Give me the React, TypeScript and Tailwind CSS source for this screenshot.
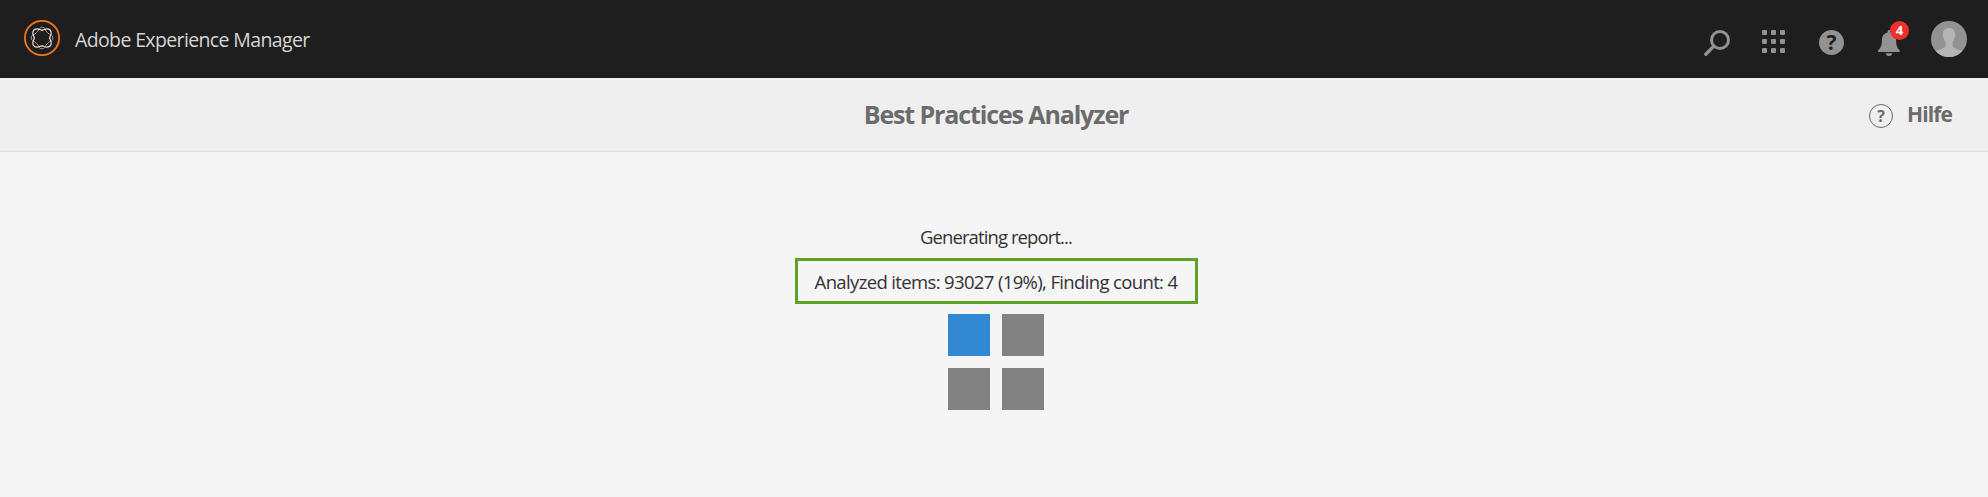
import React from "react";

const quarterTurns = [0, 90, 180, 270];

function Logo() {
  return (
    <svg className="size-9 shrink-0" viewBox="0 0 36 36" fill="none">
      <circle cx="18" cy="18" r="17.1" stroke="#f5761a" strokeWidth="1.8" />
      {quarterTurns.map((a) => (
        <g key={a} transform={`rotate(${a} 18 18)`} strokeLinecap="round">
          <path d="M14.8 9.400C15.400 6.400 20.600 6.400 21.200 9.400C21.800 11.400 24.600 14.200 26.600 14.800" stroke="#a3968e" strokeWidth="1" />
          <path d="M18 10.200C20 10.200 20.600 8.800 22.800 8.800C25.600 8.800 27.200 10.400 27.200 13.200C27.200 15.400 25.800 16 25.800 18" stroke="#f0d9cc" strokeWidth="1.200" />
        </g>
      ))}
    </svg>
  );
}

function SearchIcon() {
  return (
    <svg className="h-[26px] w-[26px]" viewBox="0 0 26 26" fill="none" stroke="#929292" strokeLinecap="round">
      <circle cx="16" cy="10" r="8.5" strokeWidth="3" />
      <path d="M9.6 16.4L1.8 24.2" strokeWidth="3.4" />
    </svg>
  );
}

function BellIcon() {
  return (
    <svg className="h-[26px] w-[22px]" viewBox="0 0 22 26" fill="#929292">
      <path d="M9.7 1.4a1.3 1.3 0 0 1 2.6 0v1.1c3.8.7 5.7 3.6 5.8 7.3.1 5.5.8 7.8 3.5 10.5V22H.2v-1.7C3 17.6 3.8 15.3 3.9 9.8 4 6.1 5.9 3.2 9.7 2.5z" />
      <path d="M7.8 23.3h6.4a3.2 2.7 0 0 1-6.4 0z" />
    </svg>
  );
}

function Avatar() {
  return (
    <svg className="size-9" viewBox="0 0 36 36">
      <defs>
        <clipPath id="avatar-clip">
          <circle cx="18" cy="18" r="18" />
        </clipPath>
      </defs>
      <g clipPath="url(#avatar-clip)">
        <rect width="36" height="36" fill="#929292" />
        <path d="M18 7c4.2 0 6.2 2.6 6 6.5.5.6.4 2.6-.5 3.5-.5 2-1.2 3.2-2 4v4c1 3 8 3.5 10.5 5.5V36H4v-5.5C6.5 28.5 13.5 28 14.5 25v-4c-.8-.8-1.5-2-2-4-.9-.9-1-2.9-.5-3.5C11.8 9.6 13.8 7 18 7z" fill="#b4b4b4" />
      </g>
    </svg>
  );
}

export default function App() {
  return (
    <div className="flex h-[497px] w-full flex-col bg-[#f5f5f5] font-['Open_Sans','Noto_Sans',sans-serif]">
      <header className="flex h-[78px] shrink-0 items-start justify-between bg-[#1e1e1e] pl-6 pr-[21px]">
        <div className="flex items-start pt-5">
          <Logo />
          <span className="ml-[15px] mt-[5px] whitespace-nowrap text-[19.5px] leading-[30px] tracking-[-0.63px] text-[#d6d6d6]">
            Adobe Experience Manager
          </span>
        </div>
        <nav className="flex items-start pt-[30px]">
          <SearchIcon />
          <div className="ml-8 grid grid-cols-3 gap-1">
            {Array.from({ length: 9 }, (_, i) => (
              <i key={i} className="size-[5px] rounded-[1px] bg-[#929292]" />
            ))}
          </div>
          <div className="ml-[34px] flex size-[25px] items-center justify-center rounded-full bg-[#929292] text-[21px] font-bold leading-[25px] text-[#1e1e1e]">
            ?
          </div>
          <div className="relative ml-[34px]">
            <BellIcon />
            <span className="absolute -top-[9px] left-3 flex size-[19px] items-center justify-center rounded-full bg-[#ec322c] text-[13px] font-bold leading-none text-white">
              4
            </span>
          </div>
          <div className="-mt-[9px] ml-[31px]">
            <Avatar />
          </div>
        </nav>
      </header>

      <div className="grid h-[74px] shrink-0 grid-cols-[1fr_auto_1fr] items-start border-b border-[#dedede] bg-[#efefef] text-[#6b6b6b]">
        <span />
        <h1 className="ml-[4px] mt-[20px] whitespace-nowrap text-[25px] font-bold leading-8 tracking-[-1.12px]">
          Best Practices Analyzer
        </h1>
        <div className="flex justify-end pr-[36px] pt-[26px]">
          <span className="flex size-6 items-center justify-center rounded-full border-[1.5px] border-[#6b6b6b] text-[16px] font-bold leading-none">
            ?
          </span>
          <span className="-mt-[5px] ml-[14px] text-[21px] font-bold leading-[30px] tracking-[-0.9px]">Hilfe</span>
        </div>
      </div>

      <main className="flex flex-col items-center pl-[4px] text-[18.5px] text-[#323232]">
        <p className="mt-[70px] whitespace-nowrap leading-[30px] tracking-[-0.9px]">Generating report...</p>
        <div className="mt-[6px] flex h-[46px] w-[403px] items-center justify-center whitespace-nowrap border-[3px] border-[#5ea226] pt-[2px] tracking-[-0.64px]">
          Analyzed items: 93027 (19%), Finding count: 4
        </div>
        <div className="mt-[10px] grid grid-cols-2 gap-3">
          <div className="size-[42px] bg-[#3187d2]" />
          <div className="size-[42px] bg-[#828282]" />
          <div className="size-[42px] bg-[#828282]" />
          <div className="size-[42px] bg-[#828282]" />
        </div>
      </main>
    </div>
  );
}
